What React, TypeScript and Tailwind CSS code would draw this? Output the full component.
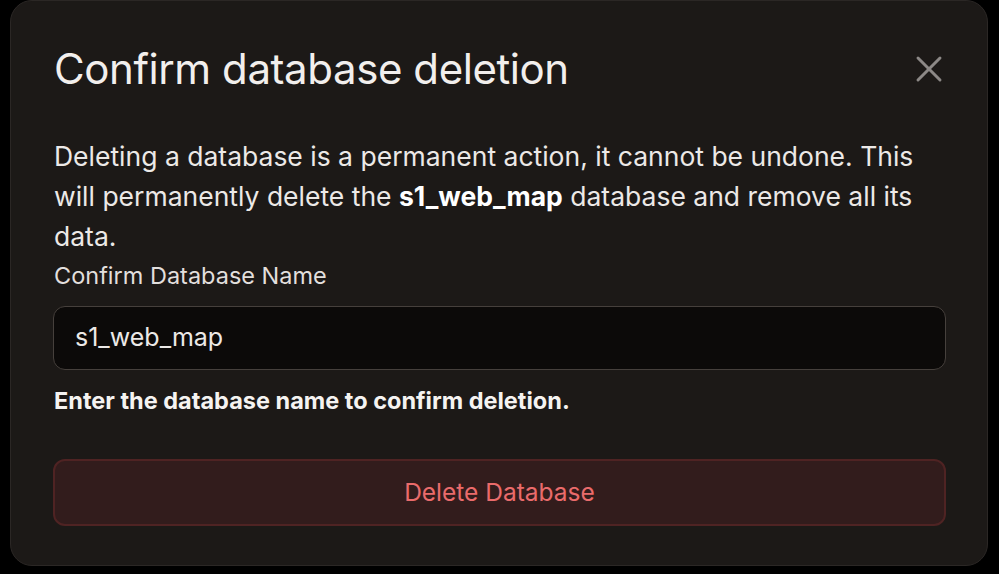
import { X } from "lucide-react"

export default function App() {
  return (
    <main className="h-[574px] w-[999px] overflow-hidden bg-black font-['Inter',sans-serif]">
      <div className="ml-[10px] flex h-[566px] w-[978px] flex-col rounded-[22px] border border-[#2b2725] bg-[#1c1917] pr-[41px] pl-[42px] pt-[40px]">
        <div className="flex items-center justify-between">
          <h2 className="ml-px text-[42px] leading-[56px] font-normal tracking-[-0.01em] text-[#f2efed]">Confirm database deletion</h2>
          <button className="-mr-[5px] text-[#8c8886]">
            <X size={44} strokeWidth={1.6} />
          </button>
        </div>

        <p className="mt-[39px] ml-px text-[26.5px] leading-[40px] text-[#ece9e7]">
          Deleting a database is a permanent action, it cannot be undone. This will permanently delete the{" "}
          <span className="font-bold text-white">s1_web_map</span> database and remove all its data.
        </p>

        <label className="ml-px text-[23.5px] leading-[40px] text-[#e2dfdd]">Confirm Database Name</label>
        <div className="mt-[10px] flex h-[64px] items-center rounded-[12px] border border-[#46403c] bg-[#0c0a09] px-[21px] text-[25px] text-[#ece9e7]">
          s1_web_map
        </div>
        <p className="mt-[13px] ml-px text-[23.5px] leading-[36px] font-bold text-[#f5f3f1]">Enter the database name to confirm deletion.</p>

        <button className="mt-[40px] flex h-[67px] items-center justify-center rounded-[12px] border-2 border-[#4f2323] bg-[#321c1c] text-[24.5px] text-[#ea6b6b]">
          Delete Database
        </button>
      </div>
    </main>
  )
}
